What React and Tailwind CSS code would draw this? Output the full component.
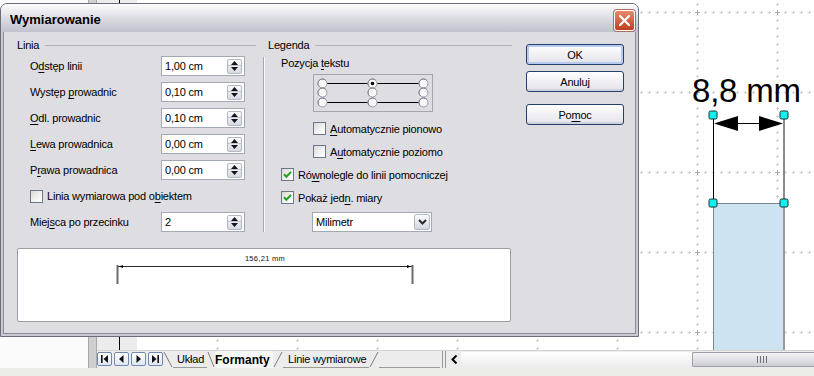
import React from 'react';

function U({ children }) {
  return <span className="underline decoration-1 underline-offset-[2px]">{children}</span>;
}

function Spin() {
  return (
    <span className="flex h-[15px] w-[15px] flex-col overflow-hidden rounded-[2px] border border-[#b3b8c4] bg-gradient-to-b from-[#fbfbfd] to-[#d6d9e2]">
      <span className="flex h-[6px] items-end justify-center border-b border-[#c3c7d0]">
        <svg width="7" height="4" viewBox="0 0 7 4"><path d="M3.5 0 L7 4 H0 Z" fill="#151515" /></svg>
      </span>
      <span className="flex flex-1 items-start justify-center pt-[1px]">
        <svg width="7" height="4" viewBox="0 0 7 4"><path d="M0 0 H7 L3.5 4 Z" fill="#151515" /></svg>
      </span>
    </span>
  );
}

function Field({ value }) {
  return (
    <div className="flex h-[20px] w-[84px] items-center border border-[#a2a9b4] bg-white pl-[3px] pr-[2px]">
      <span className="flex-1">{value}</span>
      <Spin />
    </div>
  );
}

function Row({ label, value }) {
  return (
    <div className="flex h-[26px] items-center pl-[13px]">
      <span className="w-[131px]">{label}</span>
      <Field value={value} />
    </div>
  );
}

function Check({ checked }) {
  return (
    <span className="flex h-[13px] w-[13px] shrink-0 items-center justify-center border border-[#6a768a] bg-gradient-to-br from-[#d8d8d4] via-[#f0f0ee] to-white">
      {checked && (
        <svg width="9" height="9" viewBox="0 0 9 9">
          <path d="M1 4.3 L3.4 6.7 L8 1.9" fill="none" stroke="#22a022" strokeWidth="2" />
        </svg>
      )}
    </span>
  );
}

function GroupHead({ label }) {
  return (
    <div className="flex h-[14px] items-center">
      <span>{label}</span>
      <span className="ml-[6px] h-px flex-1 bg-[#b2b2ba]" />
    </div>
  );
}

function Radio({ cx, cy, on }) {
  return (
    <g>
      <circle cx={cx} cy={cy} r="4.5" fill="#f7f7f7" stroke="#9aa0a8" />
      <path d={`M${cx - 3.2} ${cy + 3.2} A4.5 4.5 0 0 1 ${cx + 3.2} ${cy - 3.2}`} fill="none" stroke="#7c828c" />
      {on && <circle cx={cx} cy={cy} r="1.8" fill="#000" />}
    </g>
  );
}

function PosPicker() {
  const xs = [8.5, 58.5, 109.5];
  const ys = [8.5, 17.5, 27.5];
  return (
    <div className="ml-[45px] mt-[4px] h-[38px] w-[120px] border border-[#a4a4ac]">
      <svg width="118" height="36" viewBox="0 0 118 36">
        <line x1="13" y1="8.5" x2="54" y2="8.5" stroke="#000" />
        <line x1="63" y1="8.5" x2="105" y2="8.5" stroke="#000" />
        <line x1="13" y1="27.5" x2="54" y2="27.5" stroke="#000" />
        <line x1="63" y1="27.5" x2="105" y2="27.5" stroke="#000" />
        {ys.map((y, r) =>
          xs.map((x, c) => <Radio key={`${r}-${c}`} cx={x} cy={y} on={r === 0 && c === 1} />)
        )}
      </svg>
    </div>
  );
}

function CheckRow({ pad, checked, children }) {
  return (
    <div className={`flex h-[23px] items-center gap-[4px] ${pad}`}>
      <Check checked={checked} />
      <span>{children}</span>
    </div>
  );
}

function Btn({ children, main }) {
  return (
    <div
      className={`flex h-[21px] w-[98px] items-center justify-center rounded-[3px] border border-[#24406a] bg-gradient-to-b from-white to-[#e2e2ea] ${
        main ? 'shadow-[inset_0_0_0_2px_#b7cbf1]' : 'shadow-[inset_0_-2px_0_#d2d2dc]'
      }`}
    >
      {children}
    </div>
  );
}

function NavBtn({ children }) {
  return (
    <div className="flex h-[14px] w-[15px] items-center justify-center rounded-[2px] border border-[#6f88b2] bg-gradient-to-b from-white to-[#dfe6f2]">
      <svg width="9" height="8" viewBox="0 0 9 8">{children}</svg>
    </div>
  );
}

function Slash({ w, back }) {
  return (
    <svg width={w} height="17" viewBox={`0 0 ${w} 17`} className="shrink-0">
      {back ? (
        <line x1="1" y1="1" x2={w - 1} y2="16" stroke="#7c7c7c" />
      ) : (
        <line x1="1" y1="16" x2={w - 1} y2="1" stroke="#7c7c7c" />
      )}
    </svg>
  );
}

function Canvas() {
  const hy = [12, 92, 172, 252, 332];
  const vx = [217, 297, 377, 457, 537, 617, 697, 777];
  return (
    <svg width="677" height="350" viewBox="137 0 677 350" className="block">
      <rect x="137" y="0" width="677" height="350" fill="#fff" />
      {hy.map((y) => (
        <g key={`h${y}`} stroke="#d2d2d2">
          <line x1="137" y1={y + 0.5} x2="814" y2={y + 0.5} strokeWidth="3" strokeDasharray="1 7" />
          <line x1="136" y1={y + 0.5} x2="814" y2={y + 0.5} strokeWidth="1" strokeDasharray="3 5" />
        </g>
      ))}
      {vx.map((x) => (
        <g key={`v${x}`} stroke="#d2d2d2">
          <line x1={x + 0.5} y1="4" x2={x + 0.5} y2="350" strokeWidth="3" strokeDasharray="1 7" />
          <line x1={x + 0.5} y1="3" x2={x + 0.5} y2="350" strokeWidth="1" strokeDasharray="3 5" />
        </g>
      ))}
      {hy.map((y) =>
        vx.map((x) => (
          <g key={`c${x}-${y}`} stroke="#a8a8a8">
            <line x1={x - 2} y1={y + 0.5} x2={x + 3} y2={y + 0.5} />
            <line x1={x + 0.5} y1={y - 2} x2={x + 0.5} y2={y + 3} />
          </g>
        ))
      )}

      <rect x="713.5" y="203.5" width="70" height="150" fill="#cde3f1" stroke="#7d8890" />
      <line x1="784" y1="203" x2="784" y2="350" stroke="#9a9a9a" strokeWidth="2" />
      <line x1="713.5" y1="115" x2="713.5" y2="203" stroke="#000" />
      <line x1="784" y1="115" x2="784" y2="203" stroke="#8a8a8a" strokeWidth="2" />
      <line x1="736" y1="123.5" x2="762" y2="123.5" stroke="#000" />
      <path d="M714 123.5 L738 116 L738 131 Z" fill="#000" />
      <path d="M783 123.5 L759 116 L759 131 Z" fill="#000" />
      <text x="692" y="102" fontSize="33" fontFamily="Liberation Sans, Arial, sans-serif" fill="#000">
        8,8 mm
      </text>
      {[
        [713, 115],
        [784, 115],
        [713, 203],
        [784, 203],
      ].map(([x, y]) => (
        <rect key={`k${x}-${y}`} x={x - 4} y={y - 4} width="8" height="8" rx="1.5" fill="#14f0f0" stroke="#15302f" />
      ))}
    </svg>
  );
}

export default function App() {
  return (
    <div className="relative h-[376px] w-[814px] overflow-hidden whitespace-nowrap bg-white font-['Liberation_Sans',Arial,sans-serif] text-[11px] leading-[14px] tracking-[-0.2px] text-black">
      {/* application behind the dialog */}
      <div className="flex h-full flex-col">
        <div className="flex h-[368px]">
          <div className="w-[88px] bg-[#fbfbfb]" />
          <div className="w-[9px] border-x border-[#a9a9a9] bg-[#cfcfcf]" />
          <div className="flex flex-1 flex-col">
            <div className="flex h-[350px]">
              <div className="relative w-[40px] bg-[#ececec]">
                <div className="absolute bottom-0 left-[22px] top-0 w-px bg-black" />
              </div>
              <Canvas />
            </div>
            <div className="flex h-[18px] items-start border-t border-[#d4d4d4] bg-[#ececec]">
              <div className="mt-[1px] flex gap-[2px]">
                <NavBtn>
                  <rect x="1" y="0" width="1.6" height="8" fill="#111" />
                  <path d="M8 0 L3.5 4 L8 8 Z" fill="#111" />
                </NavBtn>
                <NavBtn>
                  <path d="M6.5 0 L2 4 L6.5 8 Z" fill="#111" />
                </NavBtn>
                <NavBtn>
                  <path d="M2.5 0 L7 4 L2.5 8 Z" fill="#111" />
                </NavBtn>
                <NavBtn>
                  <path d="M1 0 L5.5 4 L1 8 Z" fill="#111" />
                  <rect x="6.4" y="0" width="1.6" height="8" fill="#111" />
                </NavBtn>
              </div>
              <Slash w={10} back />
              <div className="flex h-[17px] w-[34px] items-center border-b border-[#9a9a9a] pl-[4px]">Układ</div>
              <Slash w={8} back />
              <div className="flex h-[17px] w-[58px] items-center bg-[#f6f6f6] text-[12px] font-bold tracking-normal">Formanty</div>
              <Slash w={10} />
              <div className="flex h-[17px] w-[86px] items-center border-b border-[#9a9a9a] pl-[5px]">Linie wymiarowe</div>
              <Slash w={10} />
              <div className="h-[17px] w-[61px] border-b border-[#9a9a9a]" />
              <div className="flex h-[17px] w-[7px] justify-center gap-[2px]">
                <span className="w-px bg-[#9a9a9a]" />
                <span className="w-px bg-[#9a9a9a]" />
              </div>
              <div className="flex h-[17px] w-[14px] items-center justify-center">
                <svg width="7" height="9" viewBox="0 0 7 9">
                  <path d="M5.5 0.5 L1.5 4.5 L5.5 8.5" fill="none" stroke="#000" strokeWidth="2" />
                </svg>
              </div>
              <div className="mt-[1px] h-[15px] flex-1 bg-gradient-to-b from-white to-[#ececec]" />
              <div className="mt-[1px] flex h-[15px] w-[122px] items-center justify-center rounded-l-[2px] border border-r-0 border-[#9d9daa] bg-gradient-to-b from-[#f4f4f6] to-[#cdcdd6]">
                <div className="ml-[16px] flex h-[7px] gap-[2px]">
                  <span className="w-px bg-[#6f6f7c]" />
                  <span className="w-px bg-[#6f6f7c]" />
                  <span className="w-px bg-[#6f6f7c]" />
                  <span className="w-px bg-[#6f6f7c]" />
                </div>
              </div>
            </div>
          </div>
        </div>
        <div className="h-[8px] bg-[#ebebe8]" />
      </div>

      {/* dialog window */}
      <div className="absolute left-0 top-[3px] flex h-[334px] w-[639px] flex-col overflow-hidden rounded-t-[7px] border border-[#6d6d79] bg-[#c9c9d3]">
        <div className="flex h-[28px] items-center justify-between bg-gradient-to-b from-[#fdfdfe] via-[#dcdce4] to-[#c2c2ce] pl-[9px] pr-[3px] pt-[4px]">
          <span className="text-[13px] font-bold tracking-normal">Wymiarowanie</span>
          <div className="flex h-[21px] w-[21px] items-center justify-center rounded-[3px] border border-white bg-gradient-to-b from-[#e9876b] to-[#c13c1e] shadow-[0_0_0_1px_#b06a5a]">
            <svg width="13" height="13" viewBox="0 0 13 13">
              <path d="M2 2 L11 11 M11 2 L2 11" stroke="#fff" strokeWidth="2.2" strokeLinecap="round" />
            </svg>
          </div>
        </div>

        <div className="mx-[2px] mb-[2px] flex flex-1 border border-t-0 border-[#8c8c98] bg-[#dedde2] pl-[13px] pt-[6px]">
          <div className="flex w-[495px] flex-col">
            <div className="flex h-[197px]">
              <div className="w-[239px]">
                <GroupHead label="Linia" />
                <div className="mt-[1px]">
                  <Row label={<>O<U>d</U>stęp linii</>} value="1,00 cm" />
                  <Row label={<>Występ <U>p</U>rowadnic</>} value="0,10 cm" />
                  <Row label={<><U>O</U>dl. prowadnic</>} value="0,10 cm" />
                  <Row label={<><U>L</U>ewa prowadnica</>} value="0,00 cm" />
                  <Row label={<>P<U>r</U>awa prowadnica</>} value="0,00 cm" />
                  <div className="flex h-[26px] items-center gap-[4px] pl-[13px]">
                    <Check />
                    <span>Linia wymiarowa pod o<U>b</U>iektem</span>
                  </div>
                  <Row label={<>Miej<U>s</U>ca po przecinku</>} value="2" />
                </div>
              </div>
              <div className="ml-[7px] mt-[19px] h-[175px] w-px bg-[#a6a6ae] shadow-[1px_0_0_#fafafa]" />
              <div className="ml-[4px] w-[244px]">
                <GroupHead label="Legenda" />
                <div className="mt-[4px] flex h-[14px] items-center pl-[13px]">
                  <span>Pozycja <U>t</U>ekstu</span>
                </div>
                <PosPicker />
                <div className="mt-[5px]">
                  <CheckRow pad="pl-[45px]"><U>A</U>utomatycznie pionowo</CheckRow>
                  <CheckRow pad="pl-[45px]">A<U>u</U>tomatycznie poziomo</CheckRow>
                  <CheckRow pad="pl-[13px]" checked>Ró<U>w</U>nolegle do linii pomocniczej</CheckRow>
                  <CheckRow pad="pl-[13px]" checked>Pokaż jed<U>n</U>. miary</CheckRow>
                </div>
                <div className="ml-[44px] mt-[3px] flex h-[20px] w-[120px] items-center border border-[#a2a9b4] bg-white pl-[3px] pr-[1px]">
                  <span className="flex-1">Milimetr</span>
                  <span className="flex h-[16px] w-[16px] items-center justify-center rounded-[2px] border border-[#b3b8c4] bg-gradient-to-b from-[#fbfbfd] to-[#d3d7e1]">
                    <svg width="9" height="6" viewBox="0 0 9 6">
                      <path d="M1 1 L4.5 4.5 L8 1" fill="none" stroke="#2a2a2a" strokeWidth="2" />
                    </svg>
                  </span>
                </div>
              </div>
            </div>
            <div className="mt-[13px] h-[74px] w-[494px] rounded-[2px] border border-[#9c9ca4] bg-white">
              <svg width="492" height="72" viewBox="0 0 492 72">
                <line x1="99" y1="17.5" x2="394" y2="17.5" stroke="#2a2a2a" />
                <line x1="99.5" y1="16" x2="99.5" y2="35" stroke="#6a6a6a" strokeWidth="2" />
                <line x1="394.5" y1="16" x2="394.5" y2="35" stroke="#6a6a6a" strokeWidth="2" />
                <path d="M101 17.5 L105 16 L105 19 Z" fill="#000" />
                <path d="M393 17.5 L389 16 L389 19 Z" fill="#000" />
                <text x="247" y="12" fontSize="7.5" textAnchor="middle" letterSpacing="0.3" fontFamily="Liberation Sans, Arial, sans-serif" fill="#111">
                  156,21 mm
                </text>
              </svg>
            </div>
          </div>
          <div className="ml-[14px] flex w-[98px] flex-col pt-[6px]">
            <Btn main>OK</Btn>
            <div className="mt-[6px]">
              <Btn>Anuluj</Btn>
            </div>
            <div className="mt-[12px]">
              <Btn>Po<U>m</U>oc</Btn>
            </div>
          </div>
        </div>
      </div>
    </div>
  );
}
